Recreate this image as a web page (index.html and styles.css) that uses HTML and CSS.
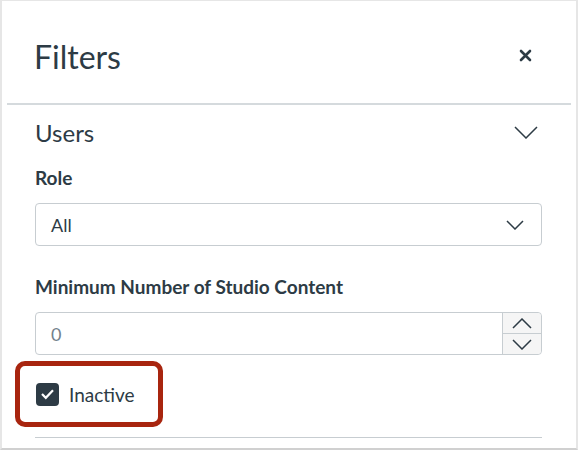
FILE: index.html
```html
<!DOCTYPE html>
<html lang="en">
<head>
    <meta charset="UTF-8">
    <meta name="viewport" content="width=device-width, initial-scale=1.0">
    <title>Filters</title>
    <link rel="stylesheet" href="styles.css">
</head>
<body>
    <div class="tray">
        <div class="tray-header">
            <h1>Filters</h1>
            <span class="close">
                <svg width="13" height="13" viewBox="0 0 13 13"><path d="M2 2 L11 11 M11 2 L2 11" stroke="#2d3b45" stroke-width="2.6" stroke-linecap="round"/></svg>
            </span>
        </div>
        <div class="group">
            <div class="group-head">
                <h2>Users</h2>
                <svg width="24" height="13" viewBox="0 0 24 13"><path d="M1 1 L12 12 L23 1" fill="none" stroke="#2d3b45" stroke-width="1.5"/></svg>
            </div>

            <div class="field-label">Role</div>
            <div class="select">
                <span>All</span>
                <svg width="18" height="10" viewBox="0 0 18 10"><path d="M1 1 L9 9 L17 1" fill="none" stroke="#2d3b45" stroke-width="1.5"/></svg>
            </div>

            <div class="field-label spaced">Minimum Number of Studio Content</div>
            <div class="number">
                <span class="value">0</span>
                <div class="spin">
                    <span class="arrow"><svg width="20" height="11" viewBox="0 0 20 11"><path d="M1 10 L10 1 L19 10" fill="none" stroke="#2d3b45" stroke-width="1.5"/></svg></span>
                    <span class="arrow"><svg width="20" height="11" viewBox="0 0 20 11"><path d="M1 1 L10 10 L19 1" fill="none" stroke="#2d3b45" stroke-width="1.5"/></svg></span>
                </div>
            </div>

            <div class="highlight">
                <span class="check">
                    <svg width="15" height="12" viewBox="0 0 15 12"><path d="M2 6 L5.8 9.8 L13 2.2" fill="none" stroke="#fff" stroke-width="2.2"/></svg>
                </span>
                Inactive
            </div>
        </div>
    </div>
</body>
</html>
```

FILE: styles.css
```css
body {
    margin: 0;
    font-family: Lato, "Open Sans", sans-serif;
    color: #2d3b45;
    background: #fff;
}

.tray {
    width: 578px;
    height: 450px;
    box-sizing: border-box;
    border: 2px solid #e6e6e6;
    border-top-width: 1px;
    border-bottom-color: #d0d0d0;
    overflow: hidden;
}

.tray-header {
    display: flex;
    align-items: center;
    justify-content: space-between;
    margin: 0 5px;
    padding: 0 39px 0 27px;
    height: 102px;
    border-bottom: 2px solid #d5dadd;
}

.tray-header h1 {
    margin: 0;
    font-size: 32px;
    font-weight: 400;
    padding-top: 8px;
}

.close {
    display: flex;
    padding-top: 6px;
}

.group {
    margin: 0 34px 0 33px;
    border-bottom: 1px solid #c7cdd1;
    padding-bottom: 10px;
}

.group-head {
    display: flex;
    align-items: center;
    justify-content: space-between;
    padding: 11px 4px 0 0;
    height: 32px;
}

.group-head h2 {
    margin: 0;
    font-size: 24px;
    font-weight: 400;
}

.field-label {
    font-size: 19px;
    font-weight: 700;
    margin: 18px 0 14px 0;
}

.field-label.spaced {
    margin: 29px 0 14px 0;
}

.select,
.number {
    display: flex;
    align-items: center;
    height: 43px;
    box-sizing: border-box;
    border: 1px solid #c7cdd1;
    border-radius: 4px;
    font-size: 18px;
}

.select {
    justify-content: space-between;
    padding: 0 17px 0 15px;
}

.number {
    justify-content: space-between;
    padding-left: 15px;
    margin-bottom: 6px;
}

.number .value {
    color: #73818c;
}

.spin {
    display: flex;
    flex-direction: column;
    width: 38px;
    height: 100%;
    border-left: 1px solid #c7cdd1;
    background: #f5f5f5;
    border-radius: 0 4px 4px 0;
}

.arrow {
    flex: 1;
    display: flex;
    align-items: center;
    justify-content: center;
}

.arrow + .arrow {
    border-top: 1px solid #c7cdd1;
}

.highlight {
    display: flex;
    align-items: center;
    gap: 10px;
    width: 148px;
    height: 66px;
    box-sizing: border-box;
    margin-left: -20px;
    padding-left: 16px;
    border: 5px solid #a8250f;
    border-radius: 10px;
    font-size: 19px;
}

.check {
    display: flex;
    align-items: center;
    justify-content: center;
    width: 23px;
    height: 23px;
    border-radius: 4px;
    background: #2d3b45;
}
```
